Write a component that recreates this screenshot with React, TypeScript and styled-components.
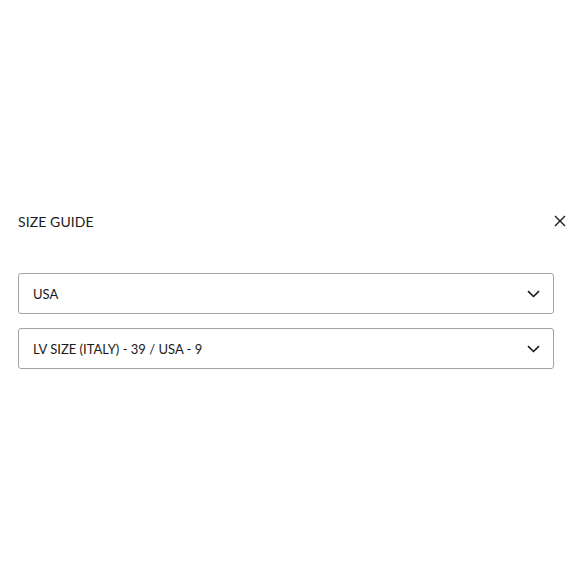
import styled, { createGlobalStyle } from "styled-components";

const GlobalStyle = createGlobalStyle`
  body {
    margin: 0;
    background: #ffffff;
    font-family: "Lato", "Noto Sans", sans-serif;
    color: #1a1a1a;
  }
`;

const Panel = styled.div`
  width: 580px;
  height: 580px;
  box-sizing: border-box;
  padding: 210px 0 0 18px;
`;

const Header = styled.div`
  display: flex;
  align-items: center;
  justify-content: space-between;
  height: 22px;
  padding-right: 13px;
`;

const Title = styled.h2`
  margin: 0;
  font-size: 14px;
  font-weight: 400;
  letter-spacing: 0.1px;
`;

const CloseButton = styled.button`
  border: none;
  background: none;
  padding: 0;
  width: 14px;
  height: 14px;
  display: flex;
  align-items: center;
  justify-content: center;
  cursor: pointer;
`;

const Selects = styled.div`
  display: flex;
  flex-direction: column;
  gap: 14px;
  margin-top: 41px;
  width: 536px;
`;

const SelectBox = styled.div`
  height: 41px;
  box-sizing: border-box;
  border: 1px solid #a3a3a3;
  border-radius: 3px;
  display: flex;
  align-items: center;
  justify-content: space-between;
  padding: 0 13px 0 14px;
  font-size: 13px;
`;

const Chevron = () => (
  <svg width="13" height="8" viewBox="0 0 13 8" fill="none">
    <path d="M1 1.2l5.5 5.3L12 1.2" stroke="#1a1a1a" strokeWidth="1.6" />
  </svg>
);

const CloseIcon = () => (
  <svg width="12" height="12" viewBox="0 0 12 12" fill="none">
    <path d="M1 1l10 10M11 1L1 11" stroke="#1a1a1a" strokeWidth="1.4" />
  </svg>
);

const options = ["USA", "LV SIZE (ITALY) - 39 / USA - 9"];

export default function App() {
  return (
    <>
      <GlobalStyle />
      <Panel>
        <Header>
          <Title>SIZE GUIDE</Title>
          <CloseButton aria-label="Close">
            <CloseIcon />
          </CloseButton>
        </Header>
        <Selects>
          {options.map((o) => (
            <SelectBox key={o}>
              <span>{o}</span>
              <Chevron />
            </SelectBox>
          ))}
        </Selects>
      </Panel>
    </>
  );
}
